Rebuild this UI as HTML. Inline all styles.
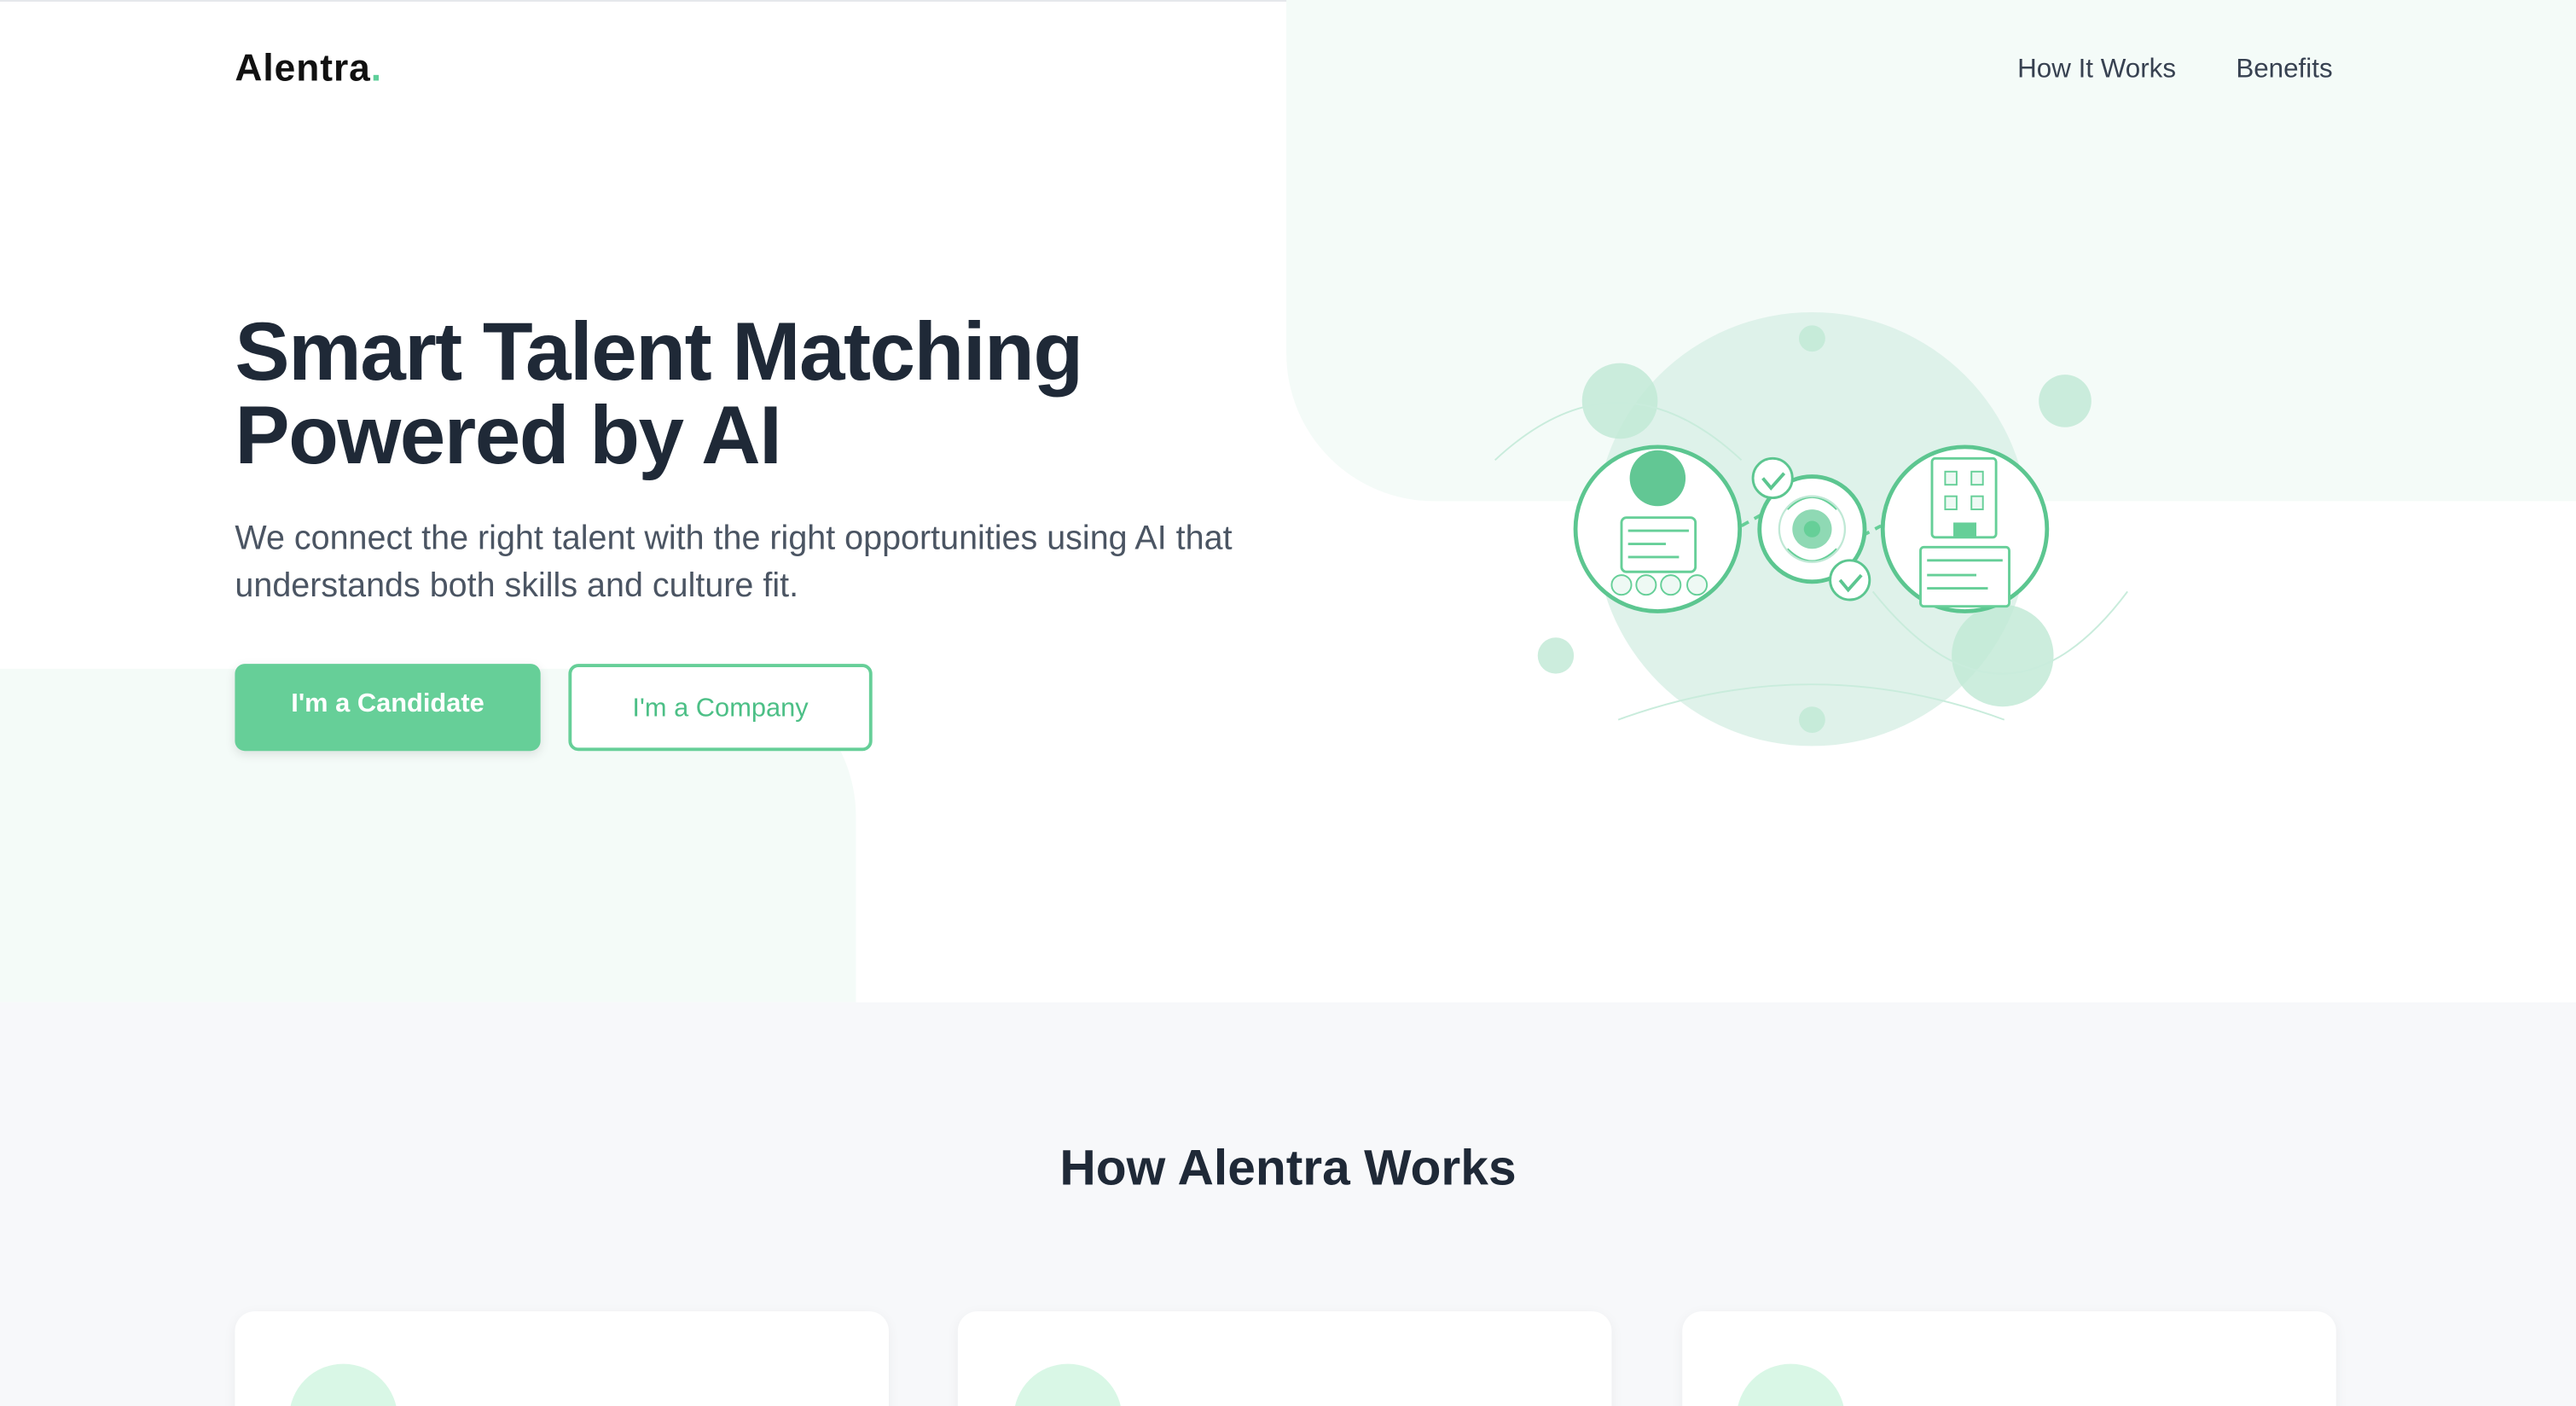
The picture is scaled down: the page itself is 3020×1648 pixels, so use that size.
<!DOCTYPE html>
<html><head><meta charset="utf-8"><style>
html,body{margin:0;padding:0;width:3020px;height:1648px;overflow:hidden;background:#fff;}
#w{width:1568px;height:856px;overflow:hidden;position:relative;transform:scale(1.92602);transform-origin:0 0;font-family:"Liberation Sans",Arial,sans-serif;background:#fff;color:#1f2937;}
.abs{position:absolute;}
</style></head><body><div id="w">
<div class="abs" style="left:0;top:0;width:1568px;height:1px;background:#e5e7eb"></div>
<div class="abs" style="left:783px;top:0;width:785px;height:305px;background:#f4fbf8;border-bottom-left-radius:90px"></div>
<div class="abs" style="left:0;top:407px;width:521px;height:203px;background:#f4fbf8;border-top-right-radius:90px"></div>
<div class="abs" style="left:0;top:610px;width:1568px;height:246px;background:#f7f8fa"></div>

<div class="abs" style="left:143px;top:28px;font-size:23px;font-weight:700;letter-spacing:0.5px;color:#111">Alentra<span style="color:#5fcf9a">.</span></div>
<div class="abs" style="left:1228px;top:33px;font-size:16.3px;color:#374151">How It Works</div>
<div class="abs" style="left:1361px;top:33px;font-size:16.3px;color:#374151">Benefits</div>

<div class="abs" style="left:143px;top:189px;font-size:50px;font-weight:700;line-height:51px;letter-spacing:-0.8px;color:#1f2937">Smart Talent Matching<br>Powered by AI</div>
<div class="abs" style="left:143px;top:313px;font-size:20.5px;line-height:29px;color:#4b5563;width:640px">We connect the right talent with the right opportunities using AI that understands both skills and culture fit.</div>
<div class="abs" style="left:143px;top:404px;width:186px;height:53px;background:#66cf98;border-radius:6px;color:#fff;font-size:16px;font-weight:700;text-align:center;line-height:50px;box-shadow:0 2px 6px rgba(0,0,0,.1)">I'm a Candidate</div>
<div class="abs" style="left:346px;top:404px;width:181px;height:49px;border:2px solid #66cf98;border-radius:6px;color:#4cbf86;font-size:16px;text-align:center;line-height:52px;background:#fff">I'm a Company</div>

<svg class="abs" style="left:900px;top:180px" width="420" height="290" viewBox="900 180 420 290">
<circle cx="1103" cy="322" r="132" fill="#dcf1e8" opacity=".9"/>
<g fill="#bfe8d5" opacity=".8">
<circle cx="1103" cy="206" r="8"/><circle cx="986" cy="244" r="23"/><circle cx="1257" cy="244" r="16"/>
<circle cx="947" cy="399" r="11"/><circle cx="1219" cy="399" r="31"/><circle cx="1103" cy="438" r="8"/></g>
<g fill="none" stroke="#c9ecdc" stroke-width="1">
<path d="M910 280 Q985 210 1060 280"/><path d="M1140 360 Q1220 460 1295 360"/><path d="M985 438 Q1103 395 1220 438"/></g>
<path d="M1060 320 L1078 310 L1100 318 L1126 330 L1145 320" fill="none" stroke="#66cf98" stroke-width="2" stroke-dasharray="5 4"/>
<g stroke="#5cc690" stroke-width="2.5" fill="#fff"><circle cx="1009" cy="322" r="50"/><circle cx="1103" cy="322" r="32"/><circle cx="1196" cy="322" r="50"/></g>
<circle cx="1009" cy="291" r="17" fill="#62c794"/>
<rect x="987" y="315" width="45" height="33" rx="3" fill="#fff" stroke="#66cf98" stroke-width="1.5"/>
<g stroke="#66cf98" stroke-width="1.5"><line x1="991" y1="323" x2="1028" y2="323"/><line x1="991" y1="331" x2="1014" y2="331"/><line x1="991" y1="339" x2="1022" y2="339"/></g>
<g fill="#eef9f4" stroke="#66cf98" stroke-width="1"><circle cx="987" cy="356" r="6"/><circle cx="1002" cy="356" r="6"/><circle cx="1017" cy="356" r="6"/><circle cx="1033" cy="356" r="6"/></g>
<circle cx="1103" cy="322" r="12" fill="#8fd9b4"/><circle cx="1103" cy="322" r="5" fill="#66cf98"/>
<g fill="none" stroke="#66cf98" stroke-width="1.2"><path d="M1088 310 Q1103 295 1118 310"/><path d="M1088 334 Q1103 349 1118 334"/><circle cx="1103" cy="322" r="20" stroke="#bfe8d5"/></g>
<rect x="1176" y="279" width="39" height="48" rx="2" fill="#fff" stroke="#66cf98" stroke-width="1.5"/>
<g fill="#eef9f4" stroke="#66cf98" stroke-width="1"><rect x="1184" y="287" width="7" height="8"/><rect x="1200" y="287" width="7" height="8"/><rect x="1184" y="302" width="7" height="8"/><rect x="1200" y="302" width="7" height="8"/></g>
<rect x="1189" y="318" width="14" height="9" fill="#66cf98"/>
<rect x="1169" y="333" width="54" height="36" rx="2" fill="#fff" stroke="#66cf98" stroke-width="1.5"/>
<g stroke="#66cf98" stroke-width="1.5"><line x1="1173" y1="341" x2="1219" y2="341"/><line x1="1173" y1="350" x2="1203" y2="350"/><line x1="1173" y1="358" x2="1210" y2="358"/></g>
<g fill="#fff" stroke="#5cc690" stroke-width="1.5"><circle cx="1079" cy="291" r="12"/><circle cx="1126" cy="353" r="12"/></g>
<g fill="none" stroke="#5cc690" stroke-width="2"><path d="M1073 291 l5 6 l8 -9"/><path d="M1120 353 l5 6 l8 -9"/></g>
</svg>

<div class="abs" style="left:0;top:694px;width:1568px;text-align:center;font-size:30.5px;font-weight:700;color:#1f2937">How Alentra Works</div>
<div class="abs" style="left:143px;top:798px;width:398px;height:80px;background:#fff;border-radius:12px;box-shadow:0 2px 8px rgba(0,0,0,.05)"></div>
<div class="abs" style="left:583px;top:798px;width:398px;height:80px;background:#fff;border-radius:12px;box-shadow:0 2px 8px rgba(0,0,0,.05)"></div>
<div class="abs" style="left:1024px;top:798px;width:398px;height:80px;background:#fff;border-radius:12px;box-shadow:0 2px 8px rgba(0,0,0,.05)"></div>
<div class="abs" style="left:176px;top:830px;width:66px;height:66px;border-radius:50%;background:#d9f7e6"></div>
<div class="abs" style="left:617px;top:830px;width:66px;height:66px;border-radius:50%;background:#d9f7e6"></div>
<div class="abs" style="left:1057px;top:830px;width:66px;height:66px;border-radius:50%;background:#d9f7e6"></div>
</div></body></html>
